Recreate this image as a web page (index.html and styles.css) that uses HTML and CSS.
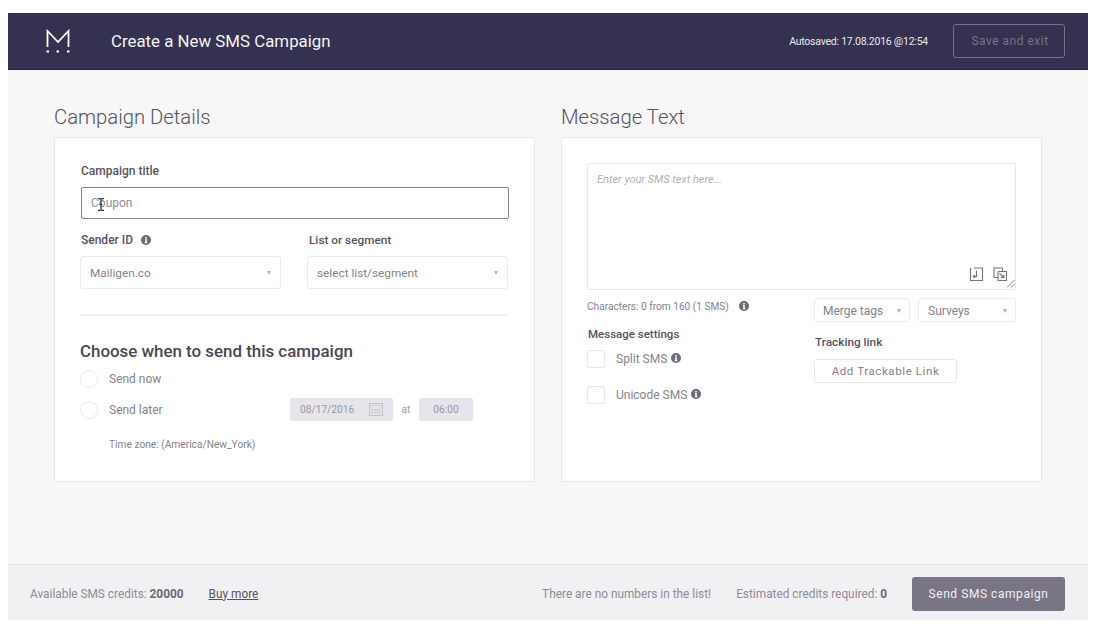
FILE: index.html
```html
<!DOCTYPE html>
<html lang="en">
<head>
<meta charset="utf-8">
<title>Create a New SMS Campaign</title>
<link rel="stylesheet" href="styles.css">
</head>
<body>
<div class="app">
  <header class="topbar">
    <svg class="logo" width="24" height="24" viewBox="0 0 24 24" fill="none" stroke="#fff">
      <path d="M1.500 18V2L12 13 22.500 2v16" stroke-width="1.800"/>
      <path d="M0.500 22.500h2.500M10.500 22.500h2.500M21 22.500h2.500" stroke-width="2"/>
    </svg>
    <h1 class="page-title">Create a New SMS Campaign</h1>
    <span class="autosaved">Autosaved: 17.08.2016 @12:54</span>
    <button class="save-btn">Save and exit</button>
  </header>

  <main class="content">
    <section class="column">
      <h2 class="section-title">Campaign Details</h2>
      <div class="card card-left">
        <label class="label label-first">Campaign title</label>
        <div class="title-input">Coupon
          <svg class="ibeam" width="8" height="13" viewBox="0 0 8 13" fill="none" stroke="#333" stroke-width="1.200"><path d="M1 .6h2l1 .9 1-.9h2M4 1.500v10M1 12.400h2l1-.9 1 .9h2M2.500 6.500h3"/></svg>
        </div>
        <div class="two-selects">
          <div class="field">
            <div class="label label-info">Sender ID
              <svg class="info info-sender" width="10" height="10" viewBox="0 0 10 10"><circle cx="5" cy="5" r="5" fill="#6f6d78"/><path d="M4.200 2h1.600v1.500H4.200zM4 4.200h1.800v3h.5v1H3.800v-1h.5V5.200H4z" fill="#fff"/></svg>
            </div>
            <div class="select"><span>Mailigen.co</span><i class="caret"></i></div>
          </div>
          <div class="field">
            <div class="label label-list">List or segment</div>
            <div class="select"><span>select list/segment</span><i class="caret"></i></div>
          </div>
        </div>
        <hr class="divider">
        <h3 class="when-title">Choose when to send this campaign</h3>
        <div class="radio-row radio-now"><i class="radio"></i><span class="option">Send now</span></div>
        <div class="radio-row radio-later">
          <i class="radio"></i><span class="option">Send later</span>
          <div class="schedule">
            <div class="date-box">08/17/2016
              <svg width="14" height="13" viewBox="0 0 14 13" fill="none" stroke="#c3c1cb"><rect x=".5" y=".5" width="13" height="12"/><path d="M.5 3h13M3.500 5.500v5M7 5.500v5M10.500 5.500v5M2 7h10M2 9.500h10" stroke-dasharray="1 1"/></svg>
            </div>
            <span class="at">at</span>
            <div class="time-box">06:00</div>
          </div>
        </div>
        <div class="timezone">Time zone: (America/New_York)</div>
      </div>
    </section>

    <section class="column">
      <h2 class="section-title">Message Text</h2>
      <div class="card card-right">
        <div class="textarea">
          <span class="placeholder">Enter your SMS text here...</span>
          <div class="ta-icons">
            <svg width="15" height="15" viewBox="0 0 15 15" fill="none" stroke="#77757f" stroke-width="1.100"><path d="M5 1H13.500V13.500H1.500V1M7.500 3.500V9.500H4.500M6 7.800 4.300 9.500 6 11.200" /></svg>
            <svg width="15" height="15" viewBox="0 0 15 15" fill="none" stroke="#77757f" stroke-width="1.100"><path d="M9.500 4V1H1V10.500H5M5 4.500H13.500V13.500H5V4.500M6.500 6.500 10.500 10M8 10.500H11V7.500"/></svg>
          </div>
          <svg class="grip" width="8" height="8" viewBox="0 0 8 8" stroke="#888" fill="none"><path d="M0 7.500 7.500 0M4 7.500 7.500 4"/></svg>
        </div>
        <div class="msg-bottom">
          <div class="msg-left">
            <div class="chars">Characters: 0 from 160 (1 SMS)
              <svg class="info info-chars" width="10" height="10" viewBox="0 0 10 10"><circle cx="5" cy="5" r="5" fill="#6f6d78"/><path d="M4.200 2h1.600v1.500H4.200zM4 4.200h1.800v3h.5v1H3.800v-1h.5V5.200H4z" fill="#fff"/></svg>
            </div>
            <div class="label settings-label">Message settings</div>
            <div class="check-row"><i class="checkbox"></i><span class="option">Split SMS</span>
              <svg class="info" width="10" height="10" viewBox="0 0 10 10"><circle cx="5" cy="5" r="5" fill="#6f6d78"/><path d="M4.200 2h1.600v1.500H4.200zM4 4.200h1.800v3h.5v1H3.800v-1h.5V5.200H4z" fill="#fff"/></svg>
            </div>
            <div class="check-row check-second"><i class="checkbox"></i><span class="option">Unicode SMS</span>
              <svg class="info" width="10" height="10" viewBox="0 0 10 10"><circle cx="5" cy="5" r="5" fill="#6f6d78"/><path d="M4.200 2h1.600v1.500H4.200zM4 4.200h1.800v3h.5v1H3.800v-1h.5V5.200H4z" fill="#fff"/></svg>
            </div>
          </div>
          <div class="msg-right">
            <div class="small-selects">
              <div class="select select-small select-merge"><span>Merge tags</span><i class="caret"></i></div>
              <div class="select select-small select-surveys"><span>Surveys</span><i class="caret"></i></div>
            </div>
            <div class="label tracking-label">Tracking link</div>
            <button class="track-btn">Add Trackable Link</button>
          </div>
        </div>
      </div>
    </section>
  </main>

  <footer class="bottombar">
    <span class="credits">Available SMS credits: <b>20000</b></span>
    <a class="buy" href="#">Buy more</a>
    <span class="spacer"></span>
    <span class="notice">There are no numbers in the list!</span>
    <span class="estimate">Estimated credits required: <b>0</b></span>
    <button class="send-btn">Send SMS campaign</button>
  </footer>
</div>
</body>
</html>
```
FILE: styles.css
```css
* { box-sizing: border-box; }
html, body { margin: 0; height: 100%; background: #fff; }
body { padding: 13px 17px 15px 8px; font-family: Roboto, "Liberation Sans", sans-serif; color: #3a3846; overflow: hidden; }
i { display: block; font-style: normal; }
button { font-family: inherit; cursor: default; }

.app { display: flex; flex-direction: column; height: 607px; background: #f7f7f8; }

.topbar { display: flex; align-items: center; height: 57px; flex: none; padding: 0 23px 0 38px; background: #353150; border-bottom: 1px solid #2a2740; }
.logo { flex: none; }
.page-title { margin: 0 0 0 41px; font-size: 16.850px; font-weight: 400; color: #f3f3f6; }
.autosaved { margin-left: auto; font-size: 10.500px; letter-spacing: -.24px; color: #e9e8ee; }
.save-btn { width: 112px; height: 34px; margin-left: 25px; padding: 0 0 1px 2px; background: transparent; border: 1px solid #75728a; border-radius: 3px; font-size: 12px; letter-spacing: .5px; color: #77748b; }

.content { flex: 1; display: flex; gap: 26px; padding: 0 46px; }
.column { width: 481px; }
.section-title { margin: 0; height: 67px; padding-top: 34px; font-size: 20.300px; line-height: 26px; font-weight: 300; color: #55535f; }
.card { height: 345px; background: #fff; border: 1px solid #e7e7ea; border-radius: 2px; }
.card-left { padding: 25px 26px 0 25px; }
.card-right { padding: 25px 25px 0 25px; }

.label { display: block; font-size: 12px; line-height: 16px; font-weight: 500; color: #55535f; }
.label-first { margin-left: 1px; }
.label-info { display: flex; align-items: center; margin-left: 1px; }
.label-list { margin-left: 2px; font-size: 11.800px; }
.info { display: block; flex: none; }
.info-sender { margin-left: 8px; }

.title-input { position: relative; height: 32px; margin: 8px 0 0 1px; width: 428px; padding-left: 9px; border: 1px solid #85838d; border-radius: 2px; font-size: 12px; line-height: 30px; color: #8f8d97; }
.ibeam { position: absolute; left: 15px; top: 10px; }

.two-selects { display: flex; gap: 26px; margin-top: 13px; }
.field { width: 201px; }
.select { display: flex; align-items: center; justify-content: space-between; height: 33px; margin-top: 8px; padding: 0 9px 0 9px; background: #fff; border: 1px solid #ebebee; border-radius: 3px; font-size: 11.800px; color: #85838d; }
.caret { width: 0; height: 0; border-left: 2.500px solid transparent; border-right: 2.500px solid transparent; border-top: 4px solid #b5b4bb; }

.divider { height: 2px; margin: 25px 0 0; width: 428px; border: 0; background: #f0f0f2; }
.when-title { margin: 25px 0 0; font-size: 16.900px; line-height: 20px; font-weight: 500; color: #4a4855; }

.radio-row { display: flex; align-items: center; }
.radio-now { margin-top: 9px; }
.radio-later { margin-top: 10px; }
.radio { width: 18px; height: 18px; flex: none; border: 1px solid #eaeaed; border-radius: 50%; }
.option { font-size: 12px; color: #85838d; }
.radio-row .option { width: 181px; margin-left: 11px; }

.schedule { display: flex; align-items: center; font-size: 10.200px; color: #9a98a4; }
.date-box { display: flex; align-items: center; justify-content: space-between; width: 103px; height: 23px; padding: 0 10px; background: #e5e5ea; border-radius: 2px; }
.at { width: 26px; text-align: center; }
.time-box { width: 54px; height: 23px; line-height: 23px; text-align: center; background: #e5e5ea; border-radius: 2px; }
.timezone { margin: 17px 0 0 29px; font-size: 10.200px; line-height: 14px; color: #85838d; }

.textarea { position: relative; width: 429px; height: 127px; padding: 4px 9px; border: 1px solid #e7e7ea; border-radius: 2px; }
.placeholder { font-size: 11px; font-style: italic; color: #b3b2ba; }
.ta-icons { position: absolute; right: 0; bottom: 7px; display: flex; gap: 9px; padding-right: 7px; }
.grip { position: absolute; right: 0; bottom: 1px; }

.msg-bottom { display: flex; }
.msg-left { width: 227px; }
.chars { display: flex; align-items: center; margin-top: 10px; font-size: 10.150px; line-height: 14px; color: #85838d; }
.info-chars { margin-left: 10px; margin-top: -2px; }
.settings-label { margin: 12px 0 0 1px; font-size: 11.500px; }
.check-row { display: flex; align-items: center; gap: 0; margin-top: 8px; }
.check-second { margin-top: 18px; }
.checkbox { width: 18px; height: 18px; flex: none; margin-right: 11px; border: 1px solid #e7e7ea; border-radius: 2px; }
.check-row .info { margin-left: 4px; margin-top: -2px; }

.msg-right { width: 202px; padding-top: 8px; }
.small-selects { display: flex; gap: 8px; }
.select-small { height: 24px; margin-top: 0; padding: 1px 8px 0 8px; font-size: 12px; }
.select-merge { width: 96px; }
.select-surveys { width: 98px; padding-left: 9px; }
.tracking-label { margin: 12px 0 0 1px; font-size: 11.800px; }
.track-btn { display: block; width: 143px; height: 24px; margin-top: 9px; padding: 0; background: #fff; border: 1px solid #e7e7ea; border-radius: 3px; font-size: 11.500px; letter-spacing: .6px; color: #85838d; }

.bottombar { display: flex; align-items: center; height: 56px; flex: none; padding: 2px 23px 0 22px; background: #f1f1f3; border-top: 1px solid #e6e6e8; font-size: 11.850px; color: #8d8b95; }
.bottombar b { font-weight: 700; color: #6d6b76; }
.buy { margin-left: 25px; color: #55535f; text-decoration: underline; }
.spacer { flex: 1; }
.estimate { margin-left: 25px; }
.send-btn { width: 153px; height: 34px; margin-left: 25px; padding: 0; background: #7a7585; border: 0; border-radius: 3px; font-size: 12px; font-weight: 400; letter-spacing: .55px; color: #f0eff3; }
```
